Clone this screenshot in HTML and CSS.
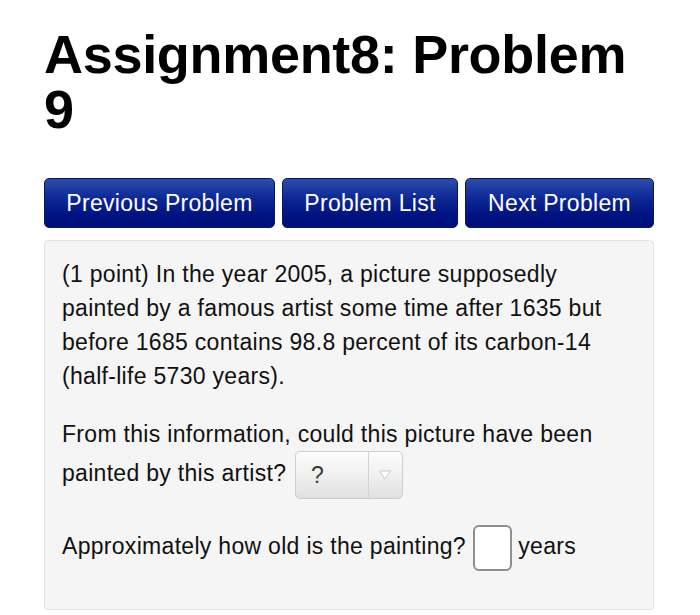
FILE: index.html
```html
<!DOCTYPE html>
<html lang="en">
<head>
<meta charset="utf-8">
<title>Assignment8: Problem 9</title>
<link rel="stylesheet" href="styles.css">
</head>
<body>
<div class="page">
  <h1 class="title">Assignment8: Problem 9</h1>
  <nav class="nav">
    <a class="btn" href="#">Previous Problem</a>
    <a class="btn" href="#">Problem List</a>
    <a class="btn" href="#">Next Problem</a>
  </nav>
  <div class="panel">
    <p class="para">(1 point) In the year 2005, a picture supposedly painted by a famous artist some time after 1635 but before 1685 contains 98.8 percent of its carbon-14 (half-life 5730 years).</p>
    <p class="para">From this information, could this picture have been painted by this artist? <span class="select-wrap"><select class="select"><option>?</option><option>Yes</option><option>No</option></select><span class="select-arrow"><svg width="14" height="10" viewBox="0 0 14 10"><path d="M1.5 1 L12.5 1 L7 9 Z" fill="#ffffff" stroke="#bdbdbd" stroke-width="0.8" stroke-linejoin="round"/></svg></span></span></p>
    <p class="para para-last">Approximately how old is the painting? <input class="answer" type="text"> years</p>
  </div>
</div>
</body>
</html>
```
FILE: styles.css
```css
html, body {
  margin: 0;
  padding: 0;
  background: #ffffff;
}

.page {
  width: 610px;
  margin-left: 44px;
  font-family: "Liberation Sans", Arial, sans-serif;
  color: #111111;
}

.title {
  margin: 27px 0 41px 0;
  font-size: 54px;
  line-height: 55px;
  font-weight: bold;
  color: #000000;
  letter-spacing: -0.3px;
}

.nav {
  display: flex;
  gap: 7px;
  margin-bottom: 12px;
}

.btn {
  box-sizing: border-box;
  height: 50px;
  display: flex;
  align-items: center;
  justify-content: center;
  padding: 0;
  flex: 0 0 auto;
  white-space: nowrap;
  border: 1px solid #0a1862;
  border-radius: 5px;
  background: linear-gradient(#2d4dab 0%, #0e2896 40%, #001282 75%, #000f78 100%);
  color: #ffffff;
  font-size: 23px;
  letter-spacing: 0.3px;
  text-decoration: none;
}

.nav .btn:first-child { width: 231px; }
.nav .btn:nth-child(2) { width: 176px; }
.nav .btn:nth-child(3) { width: 189px; }

.panel {
  box-sizing: border-box;
  width: 610px;
  height: 370px;
  background: #f5f5f5;
  border: 1px solid #e2e2e2;
  border-radius: 4px;
  padding: 16px 18px 0 17px;
}

.para {
  margin: 0 0 24px 0;
  font-size: 23px;
  line-height: 34px;
  letter-spacing: 0.3px;
}

.para-last {
  margin-top: 26px;
  margin-bottom: 0;
}

.select-wrap {
  position: relative;
  display: inline-block;
  margin-left: 2px;
  vertical-align: middle;
}

.select {
  -webkit-appearance: none;
  appearance: none;
  display: block;
  box-sizing: border-box;
  width: 108px;
  height: 48px;
  padding: 0 0 0 15px;
  border: 1px solid #cdcdcd;
  border-radius: 5px;
  background: linear-gradient(to right, transparent 72px, #d4d4d4 72px, #d4d4d4 73px, transparent 73px),
              linear-gradient(#fcfcfc 0%, #f0f0f0 50%, #e0e0e0 100%);
  font-family: "Liberation Sans", Arial, sans-serif;
  font-size: 23px;
  line-height: 46px;
  color: #3a3a3a;
}

.select-arrow {
  position: absolute;
  left: 83px;
  top: 19px;
  width: 14px;
  height: 10px;
  pointer-events: none;
}

.select-arrow svg {
  display: block;
}

.answer {
  box-sizing: border-box;
  width: 39px;
  height: 46px;
  border: 2px solid #8e8e8e;
  border-radius: 6px;
  background: #ffffff;
  padding: 0;
  margin: 0;
  vertical-align: middle;
}
```
